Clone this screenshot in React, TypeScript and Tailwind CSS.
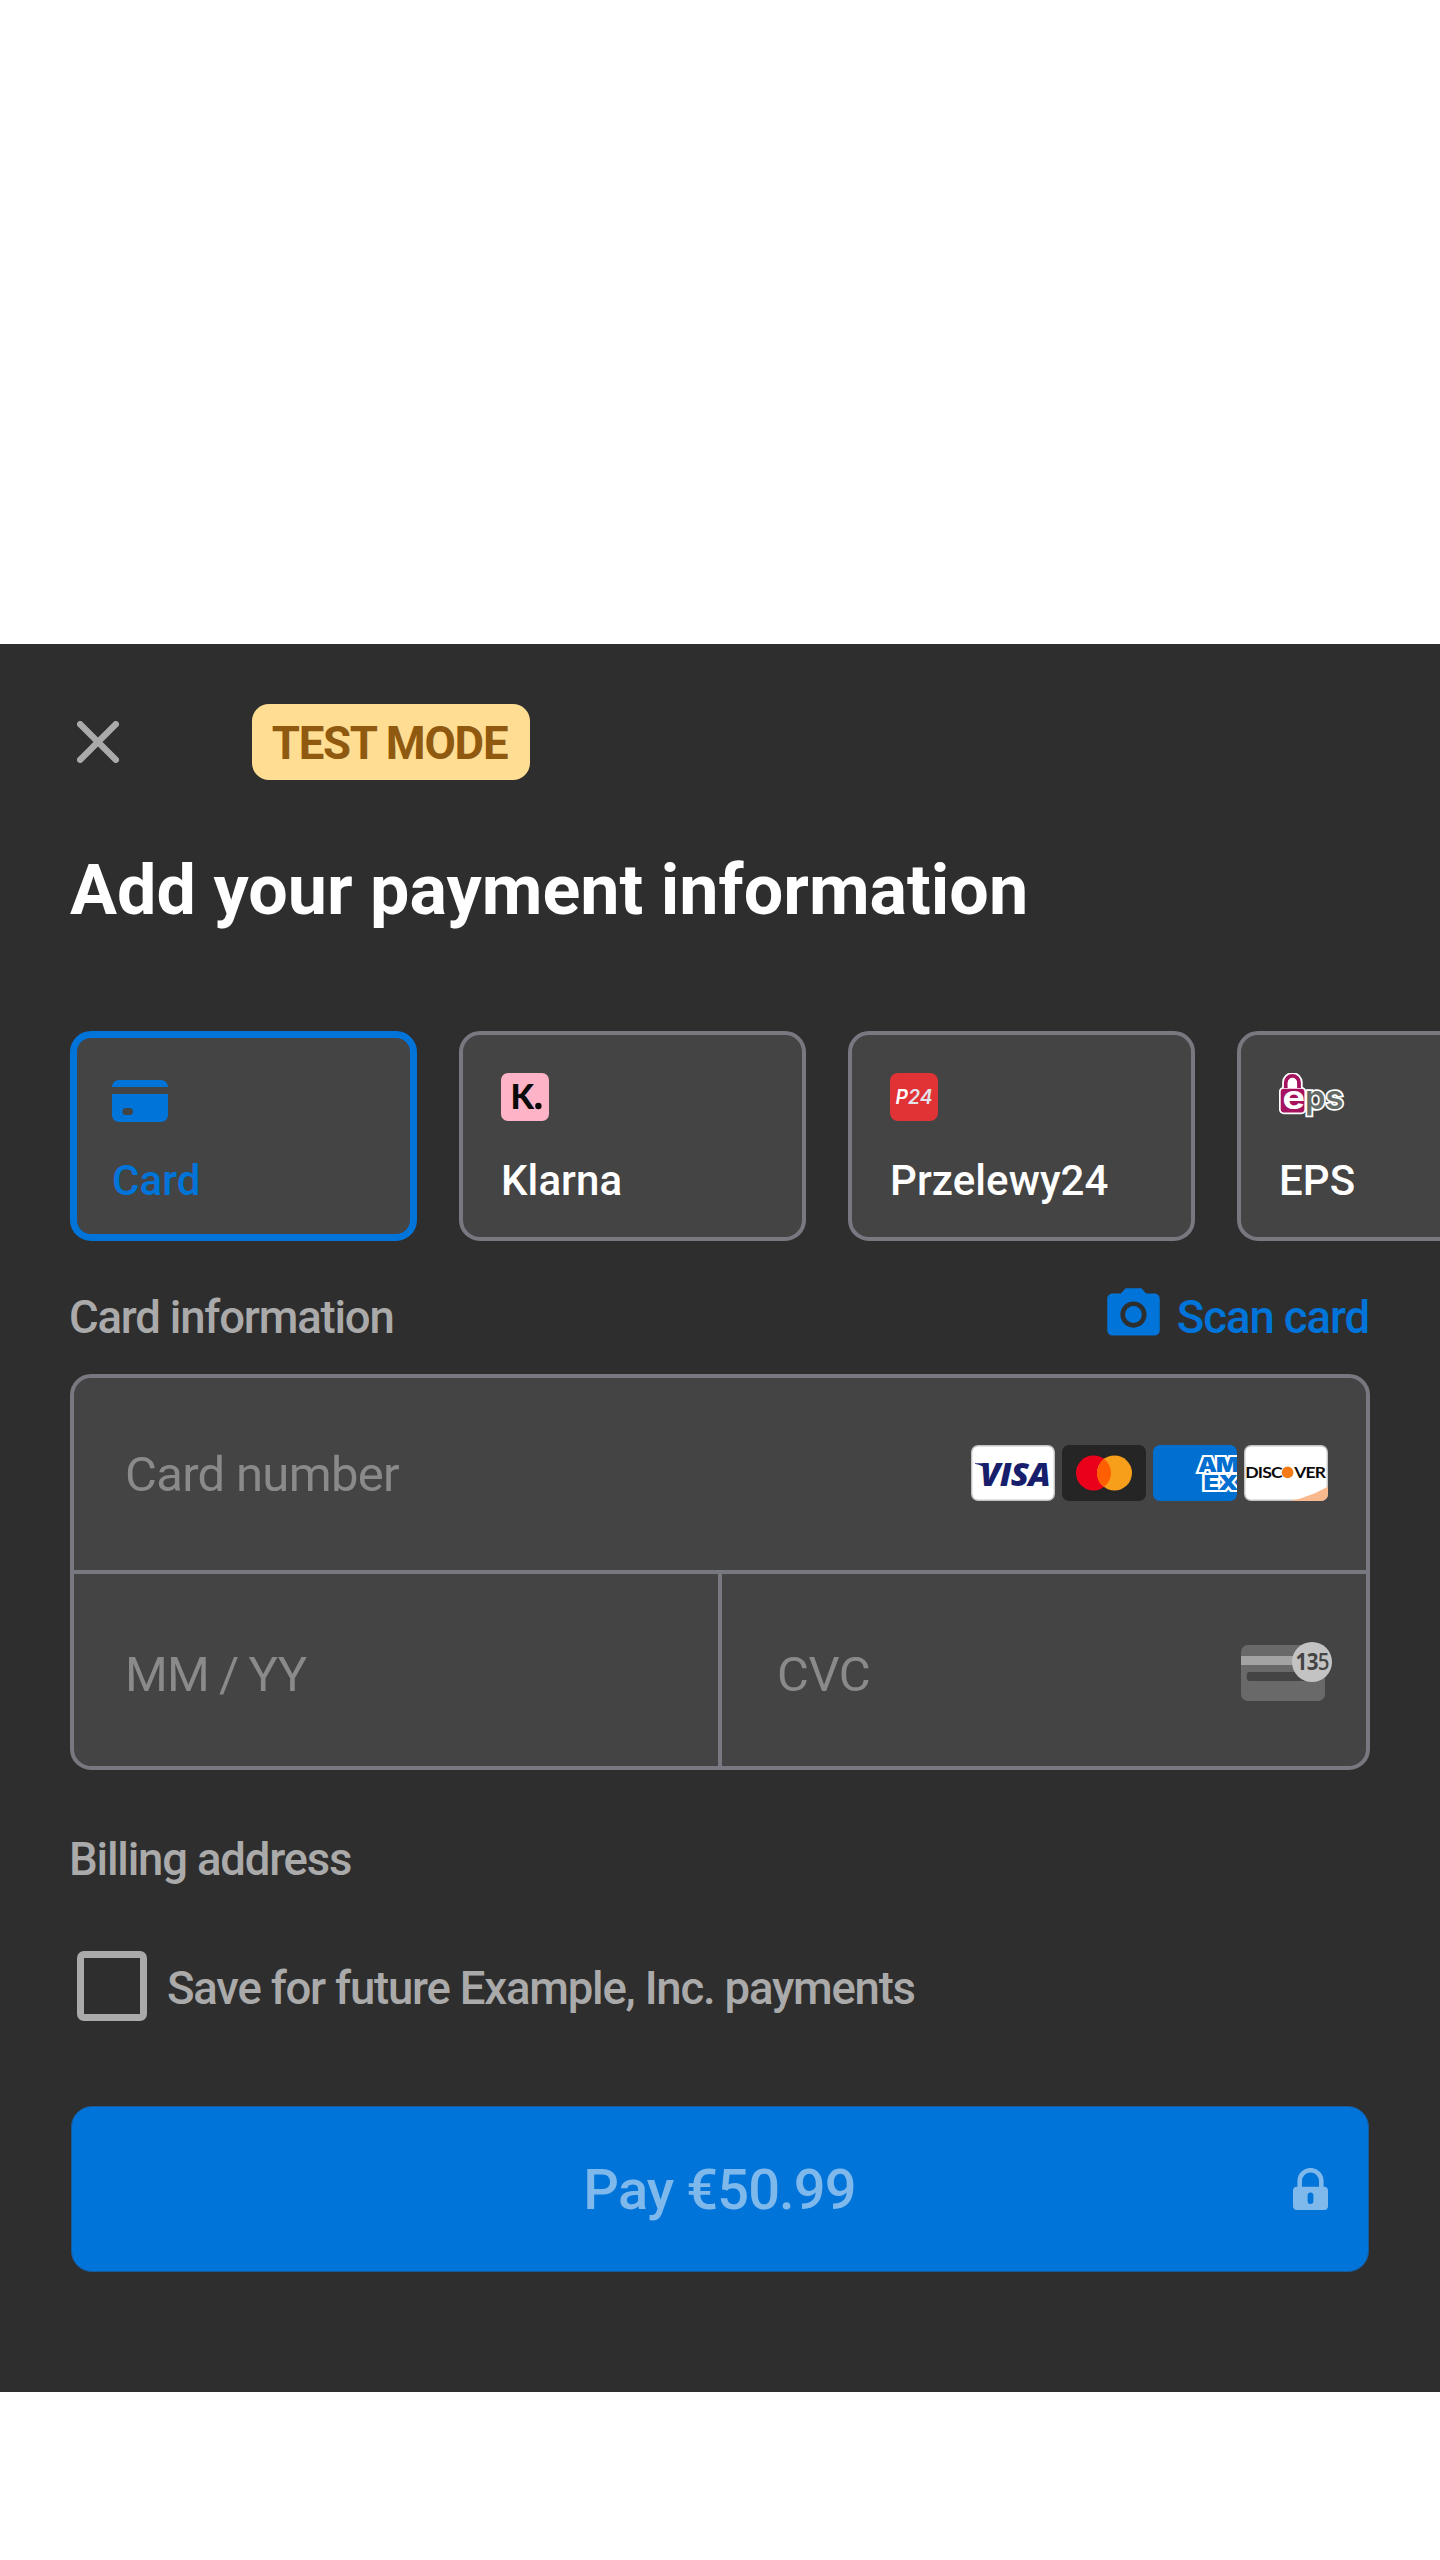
import type { ReactNode } from 'react';

const CardIcon = () => (
  <svg className="mt-[7px] h-[42px] w-[56px]" viewBox="0 0 56 42" fill="#0074d9">
    <path d="M0 7 A7 7 0 0 1 7 0 H49 A7 7 0 0 1 56 7 Z" />
    <path
      fillRule="evenodd"
      d="M0 14 H56 V35 A7 7 0 0 1 49 42 H7 A7 7 0 0 1 0 35 Z M14 28 a3.5 3.5 0 0 0 0 7 h3.5 a3.5 3.5 0 0 0 0 -7 Z"
    />
  </svg>
);

const KlarnaIcon = () => (
  <svg className="h-[48px] w-[48px]" viewBox="0 0 48 48">
    <rect width="48" height="48" rx="7" fill="#ffb3c7" />
    <text x="9.5" y="36" fontFamily="Lato" fontWeight="900" fontSize="33.5" fill="#0b0a0a" textLength="23.5" lengthAdjust="spacingAndGlyphs">
      K
    </text>
    <circle cx="37.4" cy="33" r="3.2" fill="#0b0a0a" />
  </svg>
);

const P24Icon = () => (
  <svg className="h-[48px] w-[48px]" viewBox="0 0 48 48">
    <rect width="48" height="48" rx="8" fill="#e13236" />
    <text x="5.5" y="31" fontFamily="Inter" fontStyle="italic" fontWeight="600" fontSize="19.5" textLength="37" lengthAdjust="spacingAndGlyphs" fill="#fff">
      P<tspan fill="#e3e3ec">24</tspan>
    </text>
  </svg>
);

const EpsIcon = () => (
  <svg className="h-[48px] w-[66px]" viewBox="0 0 66 48">
    <path d="M6.8 15 V9.5 a6.6 6.6 0 0 1 13.2 0 V15" fill="none" stroke="#fff" strokeWidth="7.4" />
    <rect x="0.8" y="14.8" width="25.5" height="25.5" rx="4" fill="#a5135f" stroke="#fff" strokeWidth="1.8" />
    <path d="M6.8 15 V9.5 a6.6 6.6 0 0 1 13.2 0 V15" fill="none" stroke="#a5135f" strokeWidth="3.8" />
    <path d="M8.8 14 V10 a4.6 4.6 0 0 1 9.2 0 V14 Z" fill="#fff" />
    <text x="3.4" y="36" fontFamily="Inter" fontWeight="700" fontSize="32" textLength="22.5" lengthAdjust="spacingAndGlyphs" fill="#fff">
      e
    </text>
    <text x="26" y="35.8" fontFamily="Inter" fontWeight="600" fontSize="33" textLength="38.5" lengthAdjust="spacingAndGlyphs" fill="#646b67" stroke="#fff" strokeWidth="3.6" paintOrder="stroke">
      ps
    </text>
  </svg>
);

const CameraIcon = () => (
  <svg className="h-[63px] w-[63px]" viewBox="0 0 24 24" fill="#0074d9">
    <circle cx="12" cy="12" r="3.2" />
    <path d="M9 2 7.17 4H4c-1.1 0-2 .9-2 2v12c0 1.1.9 2 2 2h16c1.1 0 2-.9 2-2V6c0-1.1-.9-2-2-2h-3.17L15 2H9zm3 15c-2.76 0-5-2.24-5-5s2.24-5 5-5 5 2.24 5 5-2.24 5-5 5z" />
  </svg>
);

const Visa = () => (
  <svg className="h-[56px] w-[84px]" viewBox="0 0 84 56">
    <rect x="0.7" y="0.7" width="82.6" height="54.6" rx="6.5" fill="#fff" stroke="#c4c4c4" strokeWidth="1.4" />
    <path d="M4 18.3 H15 L18 27 C14 21.5 9 19.5 4 18.9 Z" fill="#171e6c" />
    <text x="9" y="40.7" fontFamily="Open Sans" fontStyle="italic" fontWeight="800" fontSize="31.5" textLength="70" lengthAdjust="spacingAndGlyphs" fill="#171e6c">
      VISA
    </text>
  </svg>
);

const Mastercard = () => (
  <svg className="h-[56px] w-[84px]" viewBox="0 0 84 56">
    <rect width="84" height="56" rx="7" fill="#252525" />
    <circle cx="31.5" cy="28" r="17.5" fill="#eb001b" />
    <circle cx="52.5" cy="28" r="17.5" fill="#f79e1b" />
    <path d="M42 14 a17.5 17.5 0 0 1 0 28 a17.5 17.5 0 0 1 0 -28 Z" fill="#ff5f00" />
  </svg>
);

const Amex = () => (
  <svg className="h-[56px] w-[84px] rounded-[7px]" viewBox="0 0 84 56">
    <rect width="84" height="56" fill="#006fcf" />
    <g fontFamily="Inter" fontWeight="900" fontSize="19.5" fill="#006fcf" stroke="#fff" strokeWidth="4" paintOrder="stroke">
      <text x="45" y="26.8" textLength="40" lengthAdjust="spacingAndGlyphs">
        AM
      </text>
      <text x="50.5" y="45" textLength="34" lengthAdjust="spacingAndGlyphs">
        EX
      </text>
    </g>
  </svg>
);

const Discover = () => (
  <svg className="h-[56px] w-[84px]" viewBox="0 0 84 56">
    <rect x="0.7" y="0.7" width="82.6" height="54.6" rx="6.5" fill="#fff" stroke="#c4c4c4" strokeWidth="1.4" />
    <path d="M46 56 C60 53 73 48 84 41.5 V49 A7 7 0 0 1 77 56 Z" fill="#f9b98c" />
    <g fontFamily="Lato" fontWeight="700" fontSize="15.8" fill="#0b0a0a">
      <text x="1.2" y="33.2" textLength="36.8" lengthAdjust="spacingAndGlyphs">
        DISC
      </text>
      <text x="50.3" y="33.2" textLength="31" lengthAdjust="spacingAndGlyphs">
        VER
      </text>
    </g>
    <circle cx="43.6" cy="27.4" r="5.8" fill="#f47b16" />
  </svg>
);

const CvcIcon = () => (
  <svg className="h-[64px] w-[91px] overflow-visible" viewBox="0 0 91 64">
    <rect y="4" width="84" height="56" rx="7" fill="#696969" />
    <rect y="15" width="60" height="9" fill="#a3a3a3" />
    <rect x="5.8" y="31" width="70" height="9" rx="3" fill="#444" />
    <circle cx="71" cy="21" r="20" fill="#c3c3c3" />
    <text x="54.5" y="29" fontFamily="Noto Sans" fontWeight="700" fontSize="23.5" textLength="33.5" lengthAdjust="spacingAndGlyphs" fill="#444">
      13<tspan fontWeight="500">5</tspan>
    </text>
  </svg>
);

const LockIcon = () => (
  <svg className="h-[42px] w-[35px]" viewBox="0 0 35 42" fill="#7fb9ec">
    <path d="M6.7 20 V13 a10.8 10.8 0 0 1 21.6 0 V20" fill="none" stroke="#7fb9ec" strokeWidth="4.6" />
    <path
      fillRule="evenodd"
      d="M4 18.7 H31 a4 4 0 0 1 4 4 V38 a4 4 0 0 1 -4 4 H4 a4 4 0 0 1 -4 -4 V22.7 a4 4 0 0 1 4 -4 Z M17.5 24.5 a2.9 2.9 0 0 0 -2.9 2.9 V33 a2.9 2.9 0 0 0 5.8 0 V27.4 a2.9 2.9 0 0 0 -2.9 -2.9 Z"
    />
  </svg>
);

const Method = ({ label, icon, selected = false }: { label: string; icon: ReactNode; selected?: boolean }) => (
  <button
    className={
      'flex h-[210px] w-[347px] shrink-0 flex-col items-start rounded-[21px] bg-[#444444] text-left ' +
      (selected
        ? 'border-[7px] border-[#0074d9] px-[35px] pt-[35px] text-[#0074d9]'
        : 'border-4 border-[#787880] px-[38px] pt-[38px] text-white')
    }
  >
    <span className="block h-[48px]">{icon}</span>
    <span className="mt-[35px] text-[42px] leading-[50px] font-medium tracking-[0.08px]">{label}</span>
  </button>
);

export default function App() {
  return (
    <div className="h-[2560px] w-[1440px] overflow-hidden bg-white pt-[644px] font-[Roboto,sans-serif]">
      <main className="h-[1748px] bg-[#2e2e2e] px-[70px] pt-[60px]">
        <header className="flex h-[76px] items-center">
          <svg className="ml-[7px] h-[42px] w-[42px]" viewBox="0 0 42 42" stroke="#aaaaaa" strokeWidth="6.4" strokeLinecap="round">
            <path d="M3.2 3.2 38.8 38.8M38.8 3.2 3.2 38.8" />
          </svg>
          <span className="ml-[133px] flex h-[76px] w-[278px] items-center justify-center rounded-[17px] bg-[#ffdd93] pt-[4px] pr-[3px] text-[45.5px] font-bold tracking-[-1.2px] text-[#8f5a10]">
            TEST MODE
          </span>
        </header>

        <h1 className="mt-[70px] text-[70px] leading-[80px] font-bold tracking-[0.04px] text-white">
          Add your payment information
        </h1>

        <div className="mt-[101px] -mr-[70px] flex gap-[42px] overflow-hidden">
          <Method label="Card" icon={<CardIcon />} selected />
          <Method label="Klarna" icon={<KlarnaIcon />} />
          <Method label="Przelewy24" icon={<P24Icon />} />
          <Method label="EPS" icon={<EpsIcon />} />
        </div>

        <div className="mt-[42px] flex h-[63px] items-start justify-between text-[45.5px] leading-[54px] font-medium tracking-[-1.2px]">
          <h2 className="mt-[8px] -ml-[1px] text-[#aaaaaa]">Card information</h2>
          <button className="mr-px flex text-[#0074d9]">
            <CameraIcon />
            <span className="mt-[8px] ml-[12px] tracking-[-1.1px]">Scan card</span>
          </button>
        </div>

        <section className="mt-[28px] h-[396px] rounded-[21px] border-4 border-[#787880] bg-[#444444] text-[49px] tracking-[-0.7px] text-[#8a8a8a]">
          <div className="flex h-[196px] items-center justify-between border-b-4 border-[#787880] pr-[38px] pb-[2px] pl-[51px]">
            <span className="pt-[3px]">Card number</span>
            <div className="flex gap-[7px]">
              <Visa />
              <Mastercard />
              <Amex />
              <Discover />
            </div>
          </div>
          <div className="flex h-[192px]">
            <div className="flex w-[648px] items-center border-r-4 border-[#787880] pt-[9px] pl-[51px] [word-spacing:-1.5px]">MM / YY</div>
            <div className="flex flex-1 items-center justify-between pt-[6px] pr-[34px] pl-[55px]">
              <span className="pt-[3px] tracking-[-0.5px]">CVC</span>
              <CvcIcon />
            </div>
          </div>
        </section>

        <h2 className="mt-[63px] -ml-[1px] text-[45.5px] leading-[54px] font-medium tracking-[-1.2px] text-[#aaaaaa]">Billing address</h2>

        <label className="mt-[64px] flex h-[70px] items-center">
          <span className="ml-[7px] h-[70px] w-[70px] rounded-[7px] border-[7px] border-[#aaaaaa]" />
          <span className="ml-[20px] pt-[6px] text-[45.5px] leading-[54px] font-medium tracking-[-1.21px] text-[#aaaaaa]">
            Save for future Example, Inc. payments
          </span>
        </label>

        <button className="mx-px mt-[85px] flex h-[166px] w-[1298px] items-center justify-between rounded-[21px] border border-[#185a98] bg-[#0074d9] pr-[40px] pl-[74px] text-[56px] font-medium tracking-[-0.9px] text-[#7fb9ec]">
          <span className="flex-1 pt-[2px] text-center">Pay €50.99</span>
          <LockIcon />
        </button>
      </main>
    </div>
  );
}
